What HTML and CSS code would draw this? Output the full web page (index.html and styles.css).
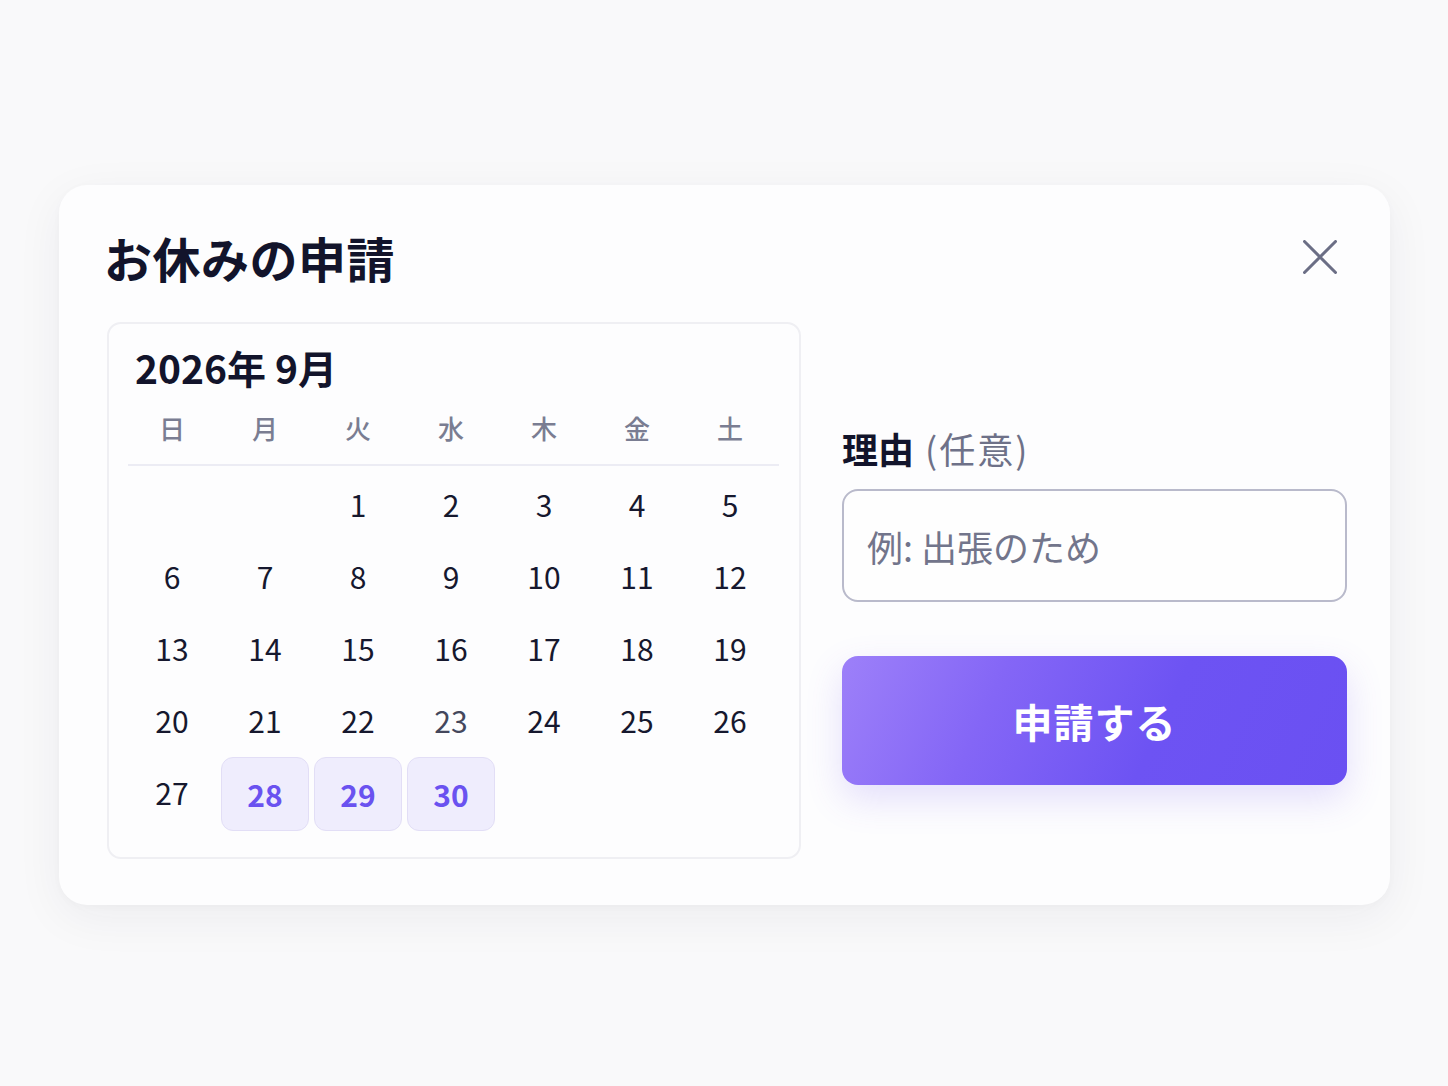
FILE: index.html
```html
<!DOCTYPE html>
<html lang="ja">
<head>
<meta charset="utf-8">
<title>お休みの申請</title>
<link rel="stylesheet" href="styles.css">
</head>
<body>
<div class="page">
  <section class="dialog">
    <header class="dialog-header">
      <h1 class="dialog-title">お休みの申請</h1>
      <button class="close-btn" aria-label="閉じる">
        <svg width="34" height="34" viewBox="0 0 34 34"><path d="M1.5 1.5 L32.5 32.5 M32.5 1.5 L1.5 32.5" stroke="#6b6e85" stroke-width="3" stroke-linecap="round" fill="none"/></svg>
      </button>
    </header>
    <div class="dialog-body">
      <div class="calendar">
        <div class="cal-title">2026年 9月</div>
        <div class="weekdays">
          <span>日</span><span>月</span><span>火</span><span>水</span><span>木</span><span>金</span><span>土</span>
        </div>
        <div class="days">
          <span class="day empty"></span><span class="day empty"></span>
          <span class="day">1</span><span class="day">2</span><span class="day">3</span><span class="day">4</span><span class="day">5</span>
          <span class="day">6</span><span class="day">7</span><span class="day">8</span><span class="day">9</span><span class="day">10</span><span class="day">11</span><span class="day">12</span>
          <span class="day">13</span><span class="day">14</span><span class="day">15</span><span class="day">16</span><span class="day">17</span><span class="day">18</span><span class="day">19</span>
          <span class="day">20</span><span class="day">21</span><span class="day">22</span><span class="day muted">23</span><span class="day">24</span><span class="day">25</span><span class="day">26</span>
          <span class="day">27</span><span class="day selected">28</span><span class="day selected">29</span><span class="day selected">30</span>
        </div>
      </div>
      <div class="form">
        <label class="field-label" for="reason"><strong>理由</strong> <span class="optional">(任意)</span></label>
        <input id="reason" class="field-input" type="text" placeholder="例: 出張のため">
        <button class="submit-btn">申請する</button>
      </div>
    </div>
  </section>
</div>
</body>
</html>
```
FILE: styles.css
```css
* { box-sizing: border-box; }
html, body { margin: 0; padding: 0; }
body {
  background: #f9f9fa;
  font-family: "Noto Sans CJK JP", "Noto Sans", sans-serif;
  color: #12142b;
}
.page {
  width: 1448px;
  height: 1086px;
  padding: 185px 58px 0 59px;
}
.dialog {
  width: 1331px;
  height: 720px;
  background: #fdfdfe;
  border-radius: 28px;
  box-shadow: 0 12px 48px rgba(30, 30, 60, 0.06), 0 2px 8px rgba(30,30,60,0.025);
  padding: 32px 43px 0 48px;
}
.dialog-header {
  display: flex;
  align-items: center;
  justify-content: space-between;
  height: 80px;
}
.dialog-title {
  margin: 0 0 0 -3px;
  font-size: 48px;
  font-weight: 700;
  letter-spacing: 0.5px;
  color: #12142b;
  line-height: 1;
}
.close-btn {
  border: 0;
  background: transparent;
  padding: 0;
  width: 34px;
  height: 34px;
  margin-right: 10px;
  display: flex;
}
.dialog-body {
  display: flex;
  gap: 41px;
  margin-top: 25px;
}
.calendar {
  width: 694px;
  height: 537px;
  border: 2px solid #efeff3;
  border-radius: 14px;
  padding: 17px 20px 0 19px;
}
.cal-title {
  font-size: 39px;
  font-weight: 700;
  line-height: 52px;
  padding-left: 7px;
  color: #12142b;
}
.weekdays {
  display: grid;
  grid-template-columns: repeat(7, 1fr);
  column-gap: 5px;
  margin-top: 17px;
  height: 56px;
  padding-right: 5px;
  border-bottom: 2px solid #ececf4;
  align-items: start;
}
.weekdays span {
  text-align: center;
  font-size: 26px;
  font-weight: 500;
  color: #7a7d92;
  line-height: 36px;
}
.days {
  display: grid;
  grid-template-columns: repeat(7, 1fr);
  column-gap: 5px;
  row-gap: 2px;
  margin-top: 3px;
  margin-right: 5px;
}
.day {
  height: 70px;
  display: flex;
  align-items: center;
  justify-content: center;
  font-size: 30px;
  color: #16182e;
}
.day.muted { color: #44475c; }
.day.selected {
  height: 74px;
  background: #efedfd;
  border: 1px solid #e2def6;
  border-radius: 12px;
  color: #6a52f0;
  font-weight: 700;
}
.form {
  flex: 1;
  display: flex;
  flex-direction: column;
  padding-top: 101px;
}
.field-label {
  font-size: 36px;
  line-height: 50px;
  color: #12142b;
}
.field-label strong { font-weight: 700; }
.optional {
  color: #6e7188;
  font-weight: 400;
  margin-left: 3px;
  letter-spacing: 2px;
}
.field-input {
  margin-top: 16px;
  height: 113px;
  width: 100%;
  border: 2px solid #b9bacb;
  border-radius: 16px;
  background: #fefefe;
  padding: 0 23px;
  font-family: inherit;
  font-size: 36px;
  color: #12142b;
  outline: none;
}
.field-input::placeholder { color: #72758b; }
.submit-btn {
  margin-top: 54px;
  height: 129px;
  width: 100%;
  border: 0;
  border-radius: 16px;
  background: linear-gradient(115deg, #9d80f9 0%, #8466f6 30%, #6d53f3 62%, #6a50f2 100%);
  color: #ffffff;
  font-family: inherit;
  font-size: 40px;
  font-weight: 700;
  letter-spacing: 1px;
  box-shadow: 0 14px 36px rgba(110, 85, 240, 0.18);
}
```
